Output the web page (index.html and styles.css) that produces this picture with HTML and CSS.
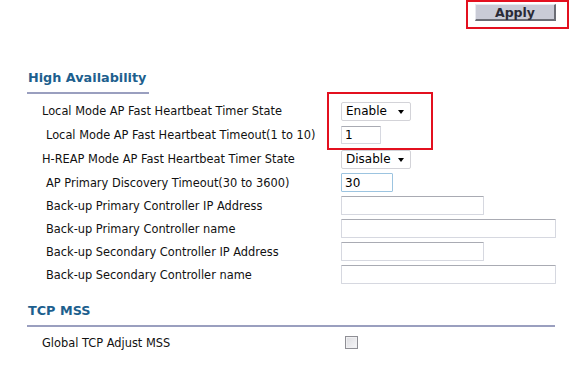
FILE: index.html
```html
<!DOCTYPE html>
<html>
<head>
    <title>Controller General</title>
    <link rel="stylesheet" href="styles.css">
</head>
<body>
    <div class="topbar">
        <button class="apply-btn" type="button">Apply</button>
        <div class="mark mark-apply"></div>
    </div>

    <div class="section">
        <h2 class="section-title short">High Availability</h2>
        <div class="form-grid">
            <div class="row r1">
                <span class="label">Local Mode AP Fast Heartbeat Timer State</span>
                <span class="select-wrap w70"><select><option>Enable</option><option>Disable</option></select></span>
            </div>
            <div class="row r2">
                <span class="label indent">Local Mode AP Fast Heartbeat Timeout(1 to 10)</span>
                <input type="text" class="field w40" value="1">
            </div>
            <div class="row r3">
                <span class="label">H-REAP Mode AP Fast Heartbeat Timer State</span>
                <span class="select-wrap w70"><select><option>Disable</option><option>Enable</option></select></span>
            </div>
            <div class="row">
                <span class="label indent">AP Primary Discovery Timeout(30 to 3600)</span>
                <input type="text" class="field w52 focus" value="30">
            </div>
            <div class="row">
                <span class="label indent">Back-up Primary Controller IP Address</span>
                <input type="text" class="field w143">
            </div>
            <div class="row">
                <span class="label indent">Back-up Primary Controller name</span>
                <input type="text" class="field w215">
            </div>
            <div class="row">
                <span class="label indent">Back-up Secondary Controller IP Address</span>
                <input type="text" class="field w143">
            </div>
            <div class="row">
                <span class="label indent">Back-up Secondary Controller name</span>
                <input type="text" class="field w215">
            </div>
        </div>
        <div class="mark mark-heartbeat"></div>
    </div>

    <div class="section tcp">
        <h2 class="section-title">TCP MSS</h2>
        <div class="form-grid">
            <div class="row">
                <span class="label">Global TCP Adjust MSS</span>
                <span class="check-cell"><input type="checkbox" class="check"></span>
            </div>
        </div>
    </div>
</body>
</html>
```

FILE: styles.css
```css
body {
    margin: 0;
    background-color: #fff;
    font-family: "DejaVu Sans", Verdana, sans-serif;
    font-size: 11.4px;
    color: #000;
}

.topbar {
    position: relative;
    height: 60px;
}

.apply-btn {
    position: absolute;
    left: 475px;
    top: 4px;
    width: 81px;
    height: 17px;
    padding: 0;
    background-color: #c9cbd6;
    border-top: 1px solid #e8e9ef;
    border-left: 1px solid #e8e9ef;
    border-right: 2px solid #6b6d75;
    border-bottom: 2px solid #6b6d75;
    font-family: "DejaVu Sans", Verdana, sans-serif;
    font-size: 12.5px;
    font-weight: bold;
    color: #2a2a35;
    line-height: 13px;
}

/* red callout boxes */
.mark {
    position: absolute;
    border: 2px solid #e3101f;
}

.mark-apply {
    left: 466px;
    top: 0;
    width: 99px;
    height: 25px;
}

.mark-heartbeat {
    left: 327px;
    top: 32px;
    width: 102px;
    height: 54px;
}

.section {
    position: relative;
    padding-left: 27px;
    width: 528px;
}

.section-title {
    margin: 0;
    padding: 10px 0 6px 1px;
    font-size: 12.8px;
    font-weight: bold;
    color: #1d5f8e;
    border-bottom: 2px solid #9a9fbf;
    line-height: 16px;
    white-space: nowrap;
}

.section-title.short {
    display: inline-block;
    width: 121px;
}

.form-grid {
    padding-top: 5px;
}

.row {
    display: grid;
    grid-template-columns: 299px 1fr;
    align-items: center;
    height: 23px;
    padding-left: 15px;
}

.row.r1,
.row.r2,
.row.r3 {
    height: 24px;
}

.label {
    white-space: nowrap;
    color: #111;
}

.label.indent {
    padding-left: 4px;
}

.select-wrap {
    position: relative;
    display: inline-block;
    height: 19px;
}

.select-wrap select {
    appearance: none;
    -webkit-appearance: none;
    width: 100%;
    height: 19px;
    padding: 0 0 0 4px;
    border: 1px solid #d3d3d8;
    border-radius: 2px;
    background-color: #fff;
    font-family: "DejaVu Sans", Verdana, sans-serif;
    font-size: 12px;
    color: #000;
}

.select-wrap::after {
    content: "";
    position: absolute;
    right: 7px;
    top: 8px;
    border-left: 3.5px solid transparent;
    border-right: 3.5px solid transparent;
    border-top: 4px solid #000;
    pointer-events: none;
}

.w70 { width: 70px; }
.w40 { width: 40px; }
.w52 { width: 52px; }
.w143 { width: 143px; }
.w215 { width: 215px; }

.field {
    box-sizing: border-box;
    height: 18px;
    padding: 0 3px;
    border: 1px solid #d6d8e0;
    border-top-color: #a9abb3;
    border-radius: 1px;
    font-family: "DejaVu Sans", Verdana, sans-serif;
    font-size: 12px;
    color: #000;
}

.field.focus {
    border-color: #9cc4e0;
    height: 19px;
}

.w143.field,
.w215.field {
    height: 19px;
}

.tcp {
    margin-top: 7px;
}

.tcp .form-grid {
    padding-top: 4px;
}

.check-cell {
    padding-left: 4px;
    display: flex;
}

.check {
    appearance: none;
    -webkit-appearance: none;
    margin: 0;
    width: 13px;
    height: 13px;
    border: 1px solid #8f8f95;
    background: linear-gradient(135deg, #dcdce0, #f7f7f9);
    box-shadow: inset 0 0 0 1px #f0f0f2;
}
```
